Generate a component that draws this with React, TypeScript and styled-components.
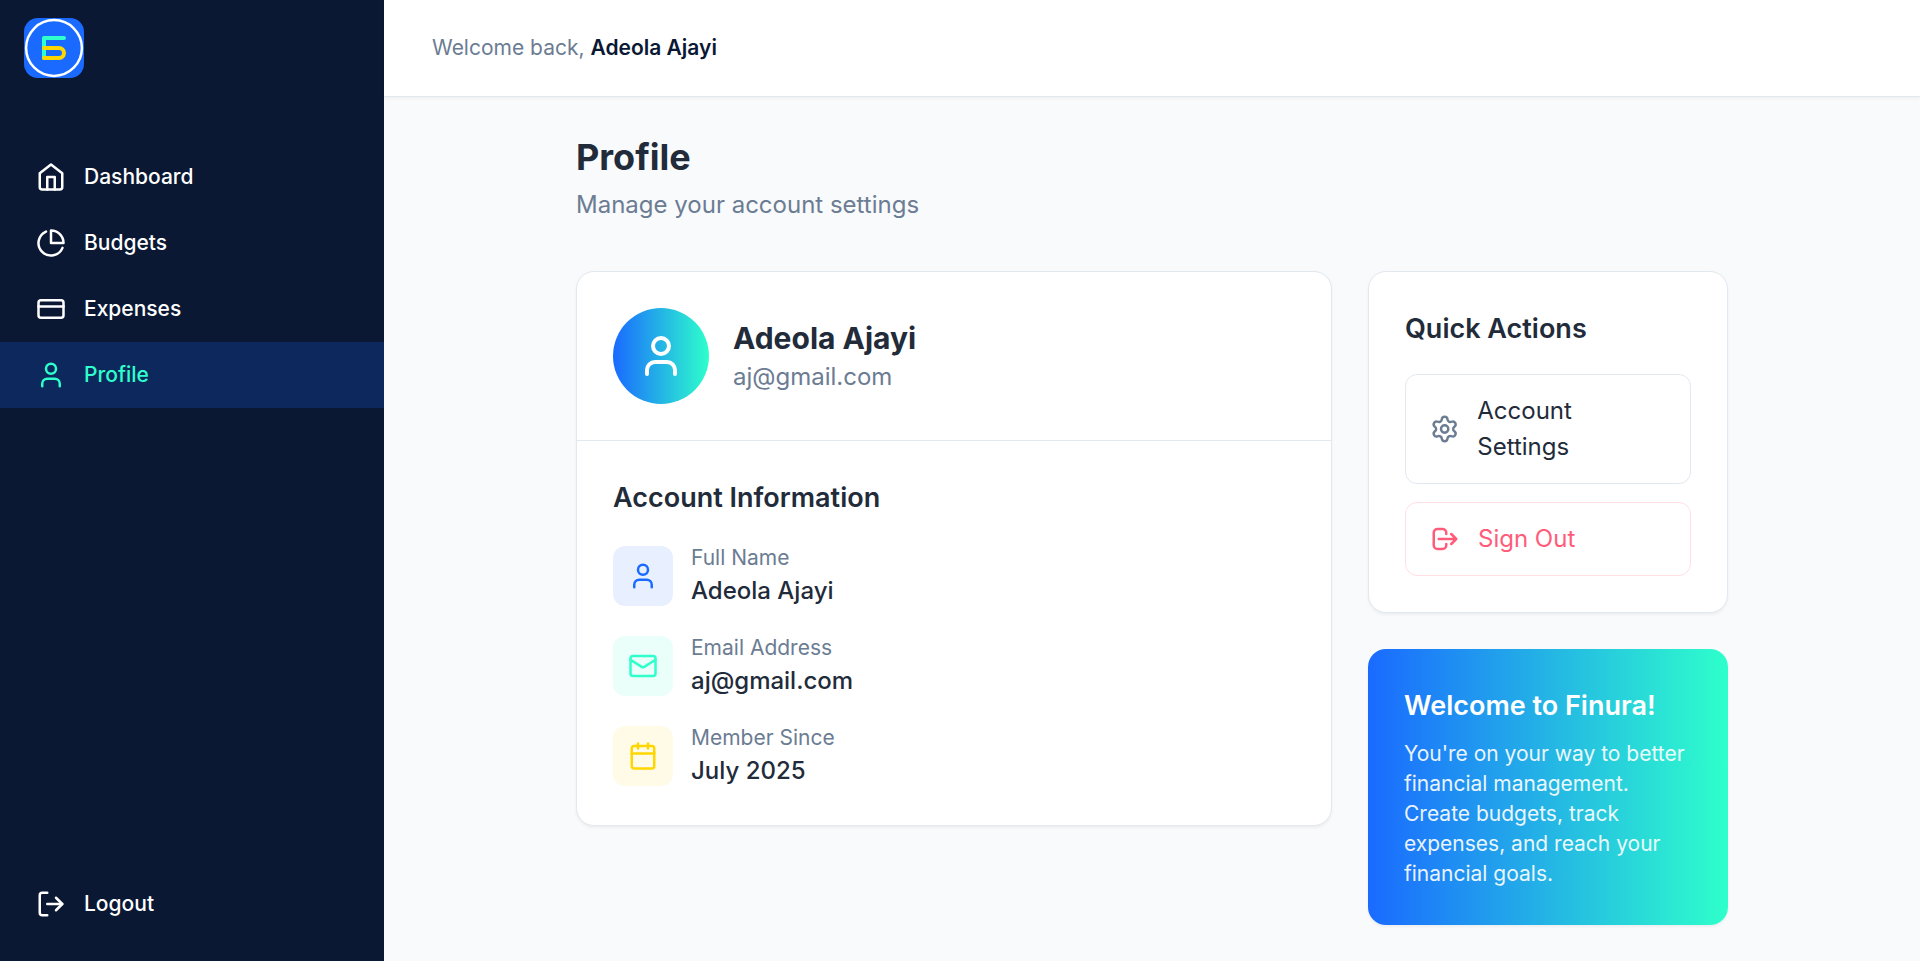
import React from "react";
import styled, { createGlobalStyle } from "styled-components";
import { Mail, Calendar, CreditCard, LogOut, Settings, User } from "lucide-react";

const brand = {
  navy: "#0a1833",
  blue: "#1a6aff",
  mint: "#2effcb",
  yellow: "#ffd600",
  ink: "#222b3a",
  slate: "#6b7c93",
  line: "#e2e8f0",
  canvas: "#f8fafc",
  rose: "#ff5c7a",
};

const GlobalStyle = createGlobalStyle`
  *, *::before, *::after { box-sizing: border-box; }
  html { font-size: 24px; }
  body {
    margin: 0;
    font-family: Inter, "Liberation Sans", sans-serif;
    line-height: 1.5;
    color: ${brand.ink};
    background: ${brand.canvas};
  }
  h1, h2, h3, p { margin: 0; }
  svg { display: block; }
`;

const Shell = styled.div`
  display: flex;
  height: 100vh;
  overflow: hidden;
`;

const Sidebar = styled.aside`
  width: 16rem;
  flex-shrink: 0;
  display: flex;
  flex-direction: column;
  background: ${brand.navy};
`;

const LogoBar = styled.div`
  height: 96px;
  padding: 0 24px;
  display: flex;
  align-items: center;
`;

const Nav = styled.nav`
  flex: 1;
  padding-top: 48px;
`;

const NavItem = styled.a<{ $active?: boolean }>`
  display: flex;
  align-items: center;
  gap: 18px;
  height: 66px;
  padding: 0 36px;
  font-size: 21px;
  line-height: 30px;
  font-weight: 500;
  color: ${(p) => (p.$active ? brand.mint : "#ffffff")};
  background: ${(p) => (p.$active ? "#0d285c" : "transparent")};
`;

const SidebarFooter = styled.div`
  padding-bottom: 24px;
`;

const Content = styled.div`
  flex: 1;
  display: flex;
  flex-direction: column;
`;

const TopBar = styled.header`
  height: 97px;
  flex-shrink: 0;
  padding: 0 48px;
  display: flex;
  align-items: center;
  background: #ffffff;
  border-bottom: 1px solid ${brand.line};
  box-shadow: 0 1.5px 3px rgba(0, 0, 0, 0.05);
  font-size: 21px;
  line-height: 30px;
  color: ${brand.slate};
`;

const UserName = styled.span`
  font-weight: 600;
  color: ${brand.navy};
`;

const Main = styled.main`
  width: 1152px;
  margin: 0 auto;
  padding-top: 36px;
`;

const PageTitle = styled.h1`
  font-size: 36px;
  line-height: 48px;
  font-weight: 700;
`;

const PageSubtitle = styled.p`
  font-size: 24px;
  line-height: 36px;
  margin-top: 6px;
  color: ${brand.slate};
`;

const Columns = styled.div`
  display: grid;
  grid-template-columns: 756px 360px;
  gap: 36px;
  align-items: start;
  margin-top: 48px;
`;

const SideColumn = styled.div`
  display: grid;
  gap: 36px;
`;

const Card = styled.section`
  background: #ffffff;
  border: 1px solid ${brand.line};
  border-radius: 18px;
  box-shadow: 0 1.5px 3px rgba(0, 0, 0, 0.05);
`;

const Identity = styled.div`
  display: flex;
  align-items: center;
  gap: 24px;
  padding: 36px;
  border-bottom: 1px solid ${brand.line};
`;

const Avatar = styled.div`
  width: 96px;
  height: 96px;
  border-radius: 50%;
  display: grid;
  place-items: center;
  color: #ffffff;
  background: linear-gradient(90deg, ${brand.blue}, ${brand.mint});
`;

const IdentityName = styled.h2`
  font-size: 30px;
  line-height: 42px;
  font-weight: 700;
`;

const IdentityMail = styled.p`
  font-size: 24px;
  line-height: 36px;
  color: ${brand.slate};
`;

const Details = styled.div`
  padding: 36px;
`;

const SectionTitle = styled.h3`
  font-size: 27px;
  line-height: 42px;
  font-weight: 600;
  margin-bottom: 24px;
`;

const DetailList = styled.div`
  display: grid;
  gap: 24px;
`;

const DetailRow = styled.div`
  display: flex;
  align-items: center;
  gap: 18px;
`;

const DetailIcon = styled.div<{ $color: string; $tint: string }>`
  width: 60px;
  height: 60px;
  border-radius: 12px;
  display: grid;
  place-items: center;
  color: ${(p) => p.$color};
  background: ${(p) => p.$tint};
`;

const DetailLabel = styled.p`
  font-size: 21px;
  line-height: 30px;
  color: ${brand.slate};
`;

const DetailValue = styled.p`
  font-size: 24px;
  line-height: 36px;
  font-weight: 500;
`;

const Actions = styled(Card)`
  padding: 36px;
`;

const ActionList = styled.div`
  display: grid;
  gap: 18px;
`;

const ActionButton = styled.button<{ $danger?: boolean }>`
  display: flex;
  align-items: center;
  gap: 18px;
  width: 100%;
  padding: 18px 24px;
  font: inherit;
  text-align: left;
  border-radius: 12px;
  border: 1px solid ${(p) => (p.$danger ? "#ffdee4" : brand.line)};
  background: transparent;
  color: ${(p) => (p.$danger ? brand.rose : brand.ink)};

  svg { color: ${(p) => (p.$danger ? brand.rose : brand.slate)}; }
`;

const Promo = styled.section`
  padding: 36px;
  border-radius: 18px;
  color: #ffffff;
  background: linear-gradient(90deg, ${brand.blue}, ${brand.mint});
  box-shadow: 0 1.5px 3px rgba(0, 0, 0, 0.05);
`;

const PromoTitle = styled.h3`
  font-size: 27px;
  line-height: 42px;
  font-weight: 600;
  margin-bottom: 12px;
`;

const PromoText = styled.p`
  font-size: 21px;
  line-height: 30px;
  opacity: 0.9;
`;

const stroke = {
  fill: "none",
  stroke: "currentColor",
  strokeWidth: 2,
  strokeLinecap: "round" as const,
  strokeLinejoin: "round" as const,
};

const Logo = () => (
  <svg width="60" height="60" viewBox="0 0 60 60" fill="none">
    <rect width="60" height="60" rx="14" fill={brand.blue} />
    <circle cx="30" cy="30" r="27.9" stroke="#ffffff" strokeWidth="2.5" />
    <path d="M20 40V20H40" stroke={brand.mint} strokeWidth="4" strokeLinecap="round" strokeLinejoin="round" />
    <path d="M20 30H35a5 5 0 0 1 0 10H20" stroke={brand.yellow} strokeWidth="4" strokeLinecap="round" />
  </svg>
);

const HomeIcon = () => (
  <svg width="30" height="30" viewBox="0 0 24 24" {...stroke}>
    <path d="m3 9 9-7 9 7v11a2 2 0 0 1-2 2H5a2 2 0 0 1-2-2z" />
    <path d="M9 22V12h6v10" />
  </svg>
);

const PieIcon = () => (
  <svg width="30" height="30" viewBox="0 0 24 24" {...stroke}>
    <path d="M21.21 15.89A10 10 0 1 1 8 2.83" />
    <path d="M22 12A10 10 0 0 0 12 2v10z" />
  </svg>
);

const SignOutIcon = () => (
  <svg width="30" height="30" viewBox="0 0 24 24" {...stroke}>
    <path d="m17 16 4-4m0 0-4-4m4 4H7m6 4v1a3 3 0 0 1-3 3H6a3 3 0 0 1-3-3V7a3 3 0 0 1 3-3h4a3 3 0 0 1 3 3v1" />
  </svg>
);

export default function App() {
  return (
    <>
      <GlobalStyle />
      <Shell>
        <Sidebar>
          <LogoBar><Logo /></LogoBar>
          <Nav>
            <NavItem><HomeIcon />Dashboard</NavItem>
            <NavItem><PieIcon />Budgets</NavItem>
            <NavItem><CreditCard size={30} />Expenses</NavItem>
            <NavItem $active><User size={30} />Profile</NavItem>
          </Nav>
          <SidebarFooter>
            <NavItem><LogOut size={30} />Logout</NavItem>
          </SidebarFooter>
        </Sidebar>
        <Content>
          <TopBar>
            <p>Welcome back, <UserName>Adeola Ajayi</UserName></p>
          </TopBar>
          <Main>
            <PageTitle>Profile</PageTitle>
            <PageSubtitle>Manage your account settings</PageSubtitle>
            <Columns>
              <Card>
                <Identity>
                  <Avatar><User size={48} /></Avatar>
                  <div>
                    <IdentityName>Adeola Ajayi</IdentityName>
                    <IdentityMail>aj@gmail.com</IdentityMail>
                  </div>
                </Identity>
                <Details>
                  <SectionTitle>Account Information</SectionTitle>
                  <DetailList>
                    <DetailRow>
                      <DetailIcon $color={brand.blue} $tint="#e8f0ff"><User size={30} /></DetailIcon>
                      <div>
                        <DetailLabel>Full Name</DetailLabel>
                        <DetailValue>Adeola Ajayi</DetailValue>
                      </div>
                    </DetailRow>
                    <DetailRow>
                      <DetailIcon $color={brand.mint} $tint="#eafffa"><Mail size={30} /></DetailIcon>
                      <div>
                        <DetailLabel>Email Address</DetailLabel>
                        <DetailValue>aj@gmail.com</DetailValue>
                      </div>
                    </DetailRow>
                    <DetailRow>
                      <DetailIcon $color={brand.yellow} $tint="#fffbe6"><Calendar size={30} /></DetailIcon>
                      <div>
                        <DetailLabel>Member Since</DetailLabel>
                        <DetailValue>July 2025</DetailValue>
                      </div>
                    </DetailRow>
                  </DetailList>
                </Details>
              </Card>
              <SideColumn>
                <Actions>
                  <SectionTitle>Quick Actions</SectionTitle>
                  <ActionList>
                    <ActionButton><Settings size={30} />Account Settings</ActionButton>
                    <ActionButton $danger><SignOutIcon />Sign Out</ActionButton>
                  </ActionList>
                </Actions>
                <Promo>
                  <PromoTitle>Welcome to Finura!</PromoTitle>
                  <PromoText>
                    You're on your way to better financial management. Create budgets, track expenses, and reach your
                    financial goals.
                  </PromoText>
                </Promo>
              </SideColumn>
            </Columns>
          </Main>
        </Content>
      </Shell>
    </>
  );
}
